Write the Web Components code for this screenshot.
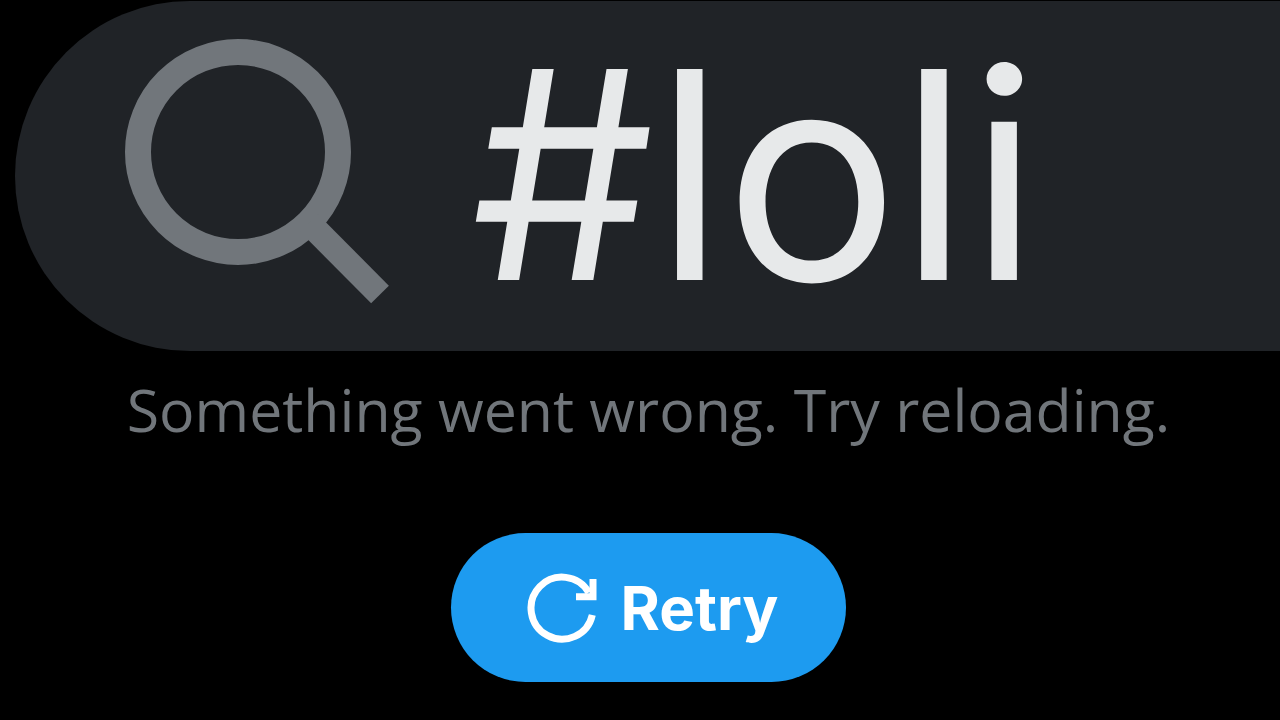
<!DOCTYPE html>
<html lang="en">
<head>
<meta charset="utf-8">
<title>Search</title>
<style>
  html { background: #000; }
  body { margin: 0; background: #000; font-family: "Open Sans", "Noto Sans", sans-serif; }
</style>
</head>
<body>
<search-page>
  <search-field slot="search" value="#loli"></search-field>
  <error-notice>
    Something went wrong. Try reloading.
    <retry-button slot="action">Retry</retry-button>
  </error-notice>
</search-page>

<script>
function define(name, html, setup) {
  const template = document.createElement("template");
  template.innerHTML = html;
  customElements.define(name, class extends HTMLElement {
    constructor() {
      super();
      this.attachShadow({ mode: "open" }).append(template.content.cloneNode(true));
    }
    connectedCallback() { if (setup) setup(this); }
  });
}

define("search-page", `
  <style>
    :host { display: block; overflow: hidden; }
    header { padding: 1px 0 0 15px; }
    main { padding: 0 0 0 17px; }
  </style>
  <header><slot name="search"></slot></header>
  <main><slot></slot></main>
`);

define("search-field", `
  <style>
    :host { display: block; }
    label {
      display: flex; align-items: center; gap: 76px;
      height: 350px; box-sizing: border-box; padding-left: 100px;
      background: #202327; border-radius: 175px 0 0 175px;
    }
    svg { flex: none; width: 280px; height: 280px; }
    input {
      flex: 1; min-width: 0; height: 100%; box-sizing: border-box;
      margin: 0; padding: 0 0 4px; border: 0; outline: 0; background: none;
      color: #e7e9ea; font: 400 290px Inter, sans-serif;
    }
  </style>
  <label>
    <svg viewBox="0 0 280 280" fill="none" stroke="#71767b" stroke-width="26" aria-hidden="true">
      <circle cx="123" cy="116" r="100"/>
      <path stroke-width="25" d="M194 187l71 71.500"/>
    </svg>
    <input type="text" aria-label="Search" spellcheck="false">
  </label>
`, el => { el.shadowRoot.querySelector("input").value = el.getAttribute("value") || ""; });

define("error-notice", `
  <style>
    :host { display: flex; flex-direction: column; align-items: center; gap: 84px; padding-top: 18px; }
    p { margin: 0; color: #71767b; font-size: 59px; line-height: 80px; white-space: nowrap; }
  </style>
  <p><slot></slot></p>
  <slot name="action"></slot>
`);

define("retry-button", `
  <style>
    :host { display: block; }
    button {
      display: flex; align-items: center; gap: 24px;
      height: 149px; padding: 0 68px 0 76px; border: 0; border-radius: 75px;
      background: #1d9bf0; color: #fff; font: 700 60px Inter, sans-serif;
      cursor: pointer;
    }
    svg { flex: none; width: 70px; height: 70px; }
  </style>
  <button type="button">
    <svg viewBox="0 0 70 70" fill="none" stroke="#fff" stroke-width="7" aria-hidden="true">
      <path d="M61.800 19.500A31 31 0 1 0 65.300 41.900"/>
      <path d="M49 23.800H66V6"/>
    </svg>
    <span><slot></slot></span>
  </button>
`);
</script>
</body>
</html>
